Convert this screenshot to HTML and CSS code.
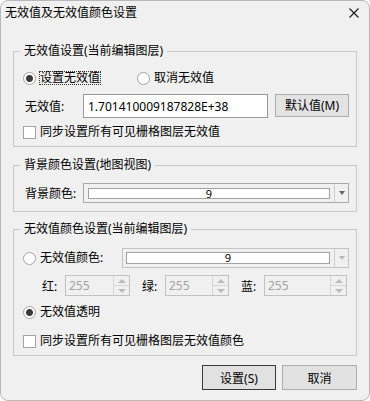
FILE: index.html
```html
<!DOCTYPE html>
<html>
<head>
    <meta charset="UTF-8">
    <title>无效值及无效值颜色设置</title>
    <link rel="stylesheet" href="styles.css">
</head>
<body>
    <div class="dialog">
        <div class="titlebar">
            <span class="title">无效值及无效值颜色设置</span>
            <svg class="close" width="10" height="10" viewBox="0 0 10 10">
                <path d="M0.5 0.5L9.5 9.5M9.5 0.5L0.5 9.5" stroke="#1a1a1a" stroke-width="1.1" fill="none"/>
            </svg>
        </div>
        <div class="content">
            <!-- 无效值设置 -->
            <fieldset class="group g1">
                <legend>无效值设置(当前编辑图层)</legend>
                <div class="row row-radio">
                    <label class="opt"><span class="radio checked"></span><span class="focus">设置无效值</span></label>
                    <label class="opt opt-2"><span class="radio"></span><span class="opt-text">取消无效值</span></label>
                </div>
                <div class="row row-value">
                    <span class="label">无效值:</span>
                    <input class="text" type="text" value="1.701410009187828E+38">
                    <button class="btn btn-default-val">默认值(M)</button>
                </div>
                <div class="row row-check">
                    <label class="opt"><span class="check"></span><span class="opt-text">同步设置所有可见栅格图层无效值</span></label>
                </div>
            </fieldset>

            <!-- 背景颜色设置 -->
            <fieldset class="group g2">
                <legend>背景颜色设置(地图视图)</legend>
                <div class="row row-combo">
                    <span class="label">背景颜色:</span>
                    <div class="combo">
                        <span class="swatch">9</span>
                        <span class="drop"><i class="arrow"></i></span>
                    </div>
                </div>
            </fieldset>

            <!-- 无效值颜色设置 -->
            <fieldset class="group g3">
                <legend>无效值颜色设置(当前编辑图层)</legend>
                <div class="row row-combo2">
                    <label class="opt opt-color"><span class="radio"></span><span class="opt-text">无效值颜色:</span></label>
                    <div class="combo disabled">
                        <span class="swatch">9</span>
                        <span class="drop"><i class="arrow"></i></span>
                    </div>
                </div>
                <div class="row row-rgb">
                    <span class="rgb-label">红:</span>
                    <div class="spin spin-r"><span class="spin-val">255</span><span class="spin-btns"><i class="up"></i><i class="down"></i></span></div>
                    <span class="rgb-label">绿:</span>
                    <div class="spin spin-g"><span class="spin-val">255</span><span class="spin-btns"><i class="up"></i><i class="down"></i></span></div>
                    <span class="rgb-label">蓝:</span>
                    <div class="spin spin-b"><span class="spin-val">255</span><span class="spin-btns"><i class="up"></i><i class="down"></i></span></div>
                </div>
                <div class="row row-trans">
                    <label class="opt"><span class="radio checked"></span><span class="opt-text">无效值透明</span></label>
                </div>
                <div class="row row-check2">
                    <label class="opt"><span class="check"></span><span class="opt-text">同步设置所有可见栅格图层无效值颜色</span></label>
                </div>
            </fieldset>

            <div class="actions">
                <button class="btn btn-ok">设置(S)</button>
                <button class="btn btn-cancel">取消</button>
            </div>
        </div>
    </div>
</body>
</html>
```

FILE: styles.css
```css
* {
  margin: 0px;
  padding: 0px;
  box-sizing: border-box;
}
html, body {
  height: 100%;
}
body {
  background: #fff;
  font-family: "Noto Sans", "Noto Sans CJK SC", sans-serif;
  font-size: 12px;
  color: #000;
}
.dialog {
  width: 370px;
  height: 401px;
  border: 1px solid #b8b8b8;
  border-radius: 8px;
  background: #f0f0f0;
  overflow: hidden;
}
.titlebar {
  height: 24px;
  padding: 0px 10px 0px 4px;
  display: flex;
  align-items: center;
  justify-content: space-between;
}
.title {
  line-height: 16px;
}
.close {
  display: block;
}
.content {
  padding: 18px 12px 0px 12px;
}
.group {
  border: 1px solid #c8c8c8;
  padding: 0px 7px 4px 9px;
}
.group legend {
  margin-left: -3px;
  padding: 0px 4px;
  line-height: 16px;
}
.g1 {
  padding-top: 9px;
}
.g2 {
  margin-top: 10px;
  padding-top: 10px;
  padding-bottom: 8px;
}
.g3 {
  margin-top: 9px;
  padding-top: 11px;
}
.row {
  display: flex;
  align-items: center;
}
.opt {
  display: flex;
  align-items: center;
  line-height: 16px;
}
.radio, .check {
  display: inline-block;
  width: 13px;
  height: 13px;
  border: 1px solid #a3a3a3;
  background: #fff;
  flex: none;
}
.radio {
  border-radius: 50%;
}
.radio.checked {
  background: radial-gradient(circle, #3a3a3a 0px, #3a3a3a 3px, #fff 4px);
}
.opt-text {
  margin-left: 4px;
}
.focus {
  margin-left: 3px;
  padding: 0px;
  line-height: 12px;
  border: 1px dotted #333;
}
.row-radio {
  height: 20px;
}
.opt-2 {
  margin-left: 36px;
}
.label {
  width: 60px;
  padding-left: 2px;
  flex: none;
}
.row-value {
  height: 24px;
  margin-top: 6px;
}
.text {
  width: 185px;
  height: 24px;
  border: 1px solid #999;
  background: #fff;
  padding-left: 4px;
  font: inherit;
  color: #000;
  outline: none;
}
.btn {
  font: inherit;
  color: #000;
  background: #e3e3e3;
  border: 1px solid #adadad;
  text-align: center;
}
.btn-default-val {
  width: 74px;
  height: 23px;
  margin-left: 7px;
  margin-top: -2px;
}
.row-check {
  height: 20px;
  margin-top: 4px;
}
.row-combo {
  height: 20px;
}
.combo {
  display: flex;
  align-items: center;
  width: 266px;
  height: 20px;
  border: 1px solid #a9a9a9;
  background: #f0f0f0;
  padding-left: 4px;
}
.swatch {
  width: 242px;
  height: 11px;
  border: 1px solid #a3a3a3;
  background: #fff;
  text-align: center;
  font-size: 11px;
  line-height: 9px;
}
.drop {
  margin-left: auto;
  width: 14px;
  height: 100%;
  border-left: 1px solid #cfcfcf;
  display: flex;
  align-items: center;
  justify-content: center;
}
.arrow {
  width: 0px;
  height: 0px;
  border-left: 3.5px solid transparent;
  border-right: 3.5px solid transparent;
  border-top: 4px solid #666;
}
.row-combo2 {
  height: 20px;
}
.opt-color {
  width: 99px;
  flex: none;
}
.combo.disabled {
  width: 227px;
  border-color: #c4c4c4;
  padding-left: 3px;
}
.combo.disabled .swatch {
  width: 204px;
  height: 12px;
  line-height: 10px;
}
.combo.disabled .arrow {
  border-top-color: #b8b8b8;
}
.row-rgb {
  height: 21px;
  margin-top: 7px;
  padding-left: 19px;
}
.rgb-label {
  width: 23px;
  flex: none;
}
.rgb-label + .spin {
  margin-right: 12px;
}
.spin {
  display: flex;
  height: 21px;
  border: 1px solid #c2c2c2;
  background: #f0f0f0;
}
.spin-r {
  width: 65px;
}
.spin-g {
  width: 64px;
}
.spin-b {
  width: 83px;
  margin-right: 0px !important;
}
.spin-val {
  flex: 1;
  padding-left: 3px;
  color: #a3a3a3;
  line-height: 19px;
}
.spin-btns {
  width: 16px;
  display: flex;
  flex-direction: column;
  border-left: 1px solid #d6d6d6;
}
.spin-btns i {
  flex: 1;
  display: flex;
  align-items: center;
  justify-content: center;
}
.spin-btns i.up {
  border-bottom: 1px solid #d6d6d6;
}
.spin-btns i.up::after, .spin-btns i.down::after {
  content: "";
  width: 0px;
  height: 0px;
  border-left: 4px solid transparent;
  border-right: 4px solid transparent;
}
.spin-btns i.up::after {
  border-bottom: 4px solid #bcbcbc;
}
.spin-btns i.down::after {
  border-top: 4px solid #bcbcbc;
}
.row-trans {
  height: 20px;
  margin-top: 6px;
}
.row-check2 {
  height: 20px;
  margin-top: 9px;
}
.actions {
  display: flex;
  justify-content: flex-end;
  margin-top: 9px;
}
.actions .btn {
  height: 25px;
  background: #e1e1e1;
}
.btn-ok {
  width: 74px;
  border-color: #3a3a3a !important;
}
.btn-cancel {
  width: 75px;
  margin-left: 6px;
}
```
